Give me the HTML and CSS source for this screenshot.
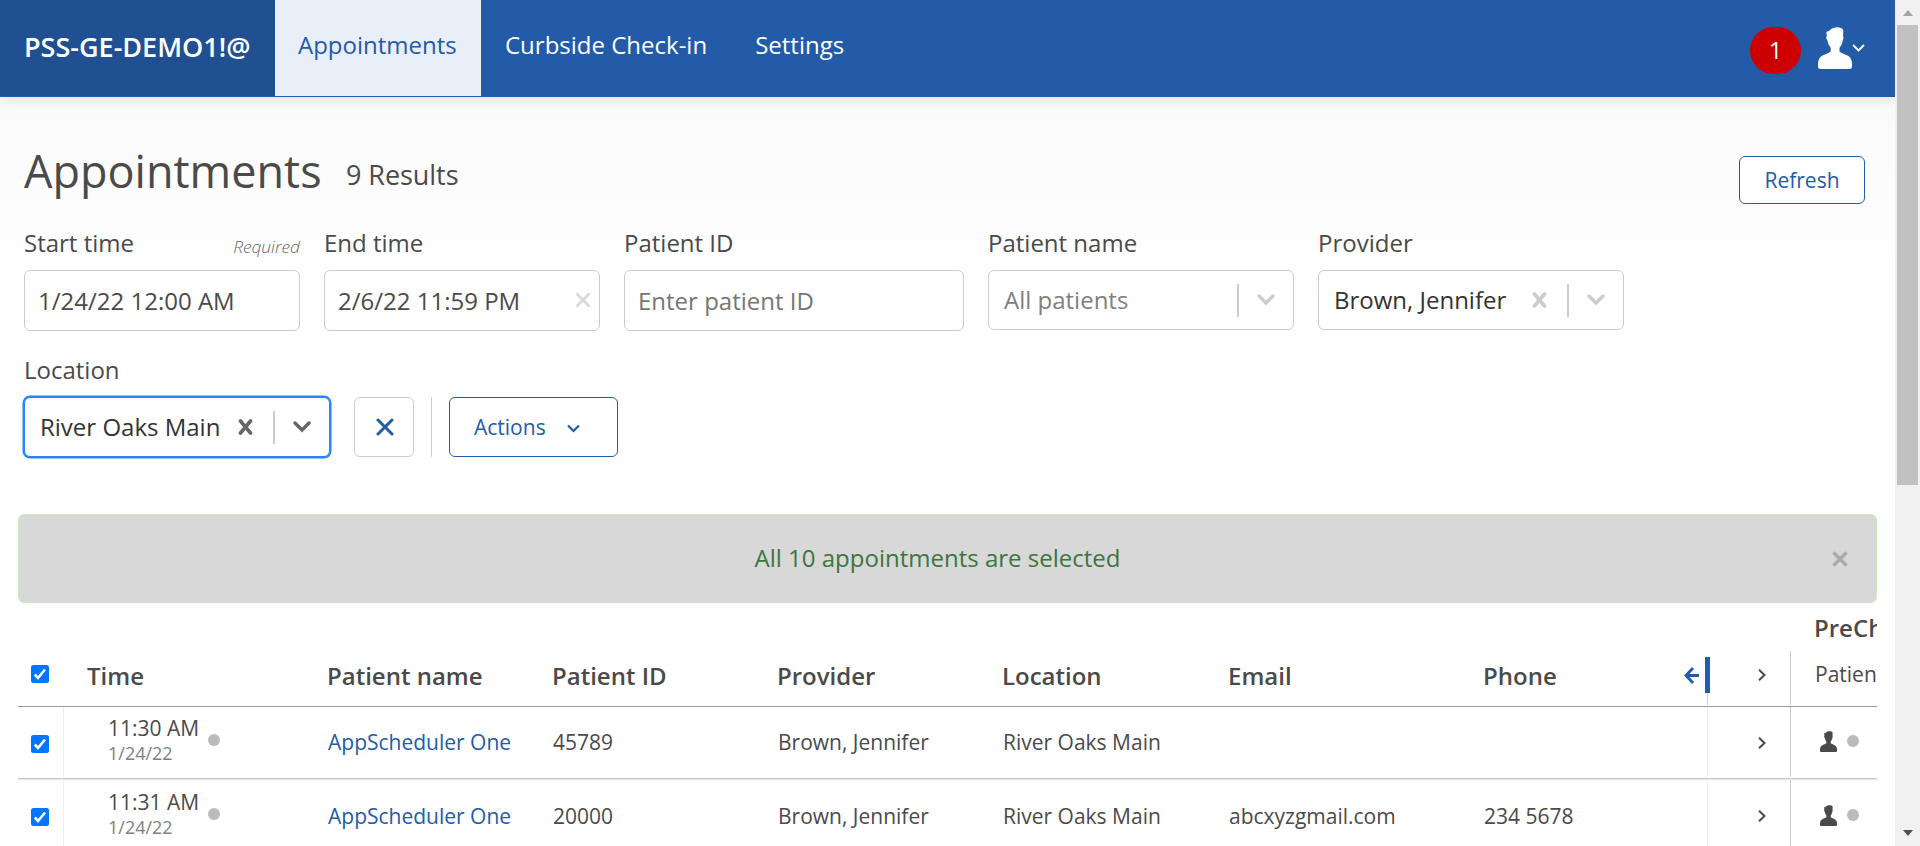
FILE: index.html
```html
<!DOCTYPE html>
<html lang="en">
<head>
<meta charset="utf-8">
<title>Appointments</title>
<link rel="stylesheet" href="styles.css">
</head>
<body>
<svg class="defs" width="0" height="0">
  <symbol id="person" viewBox="0 0 34 42">
    <path d="M8.300 5.500C8.300 4 11 4.800 12 3C14 .8 18 0 21 .4C24 .8 25.500 2.200 25.300 4.500L25 9C25.800 10 25.500 12 24.800 13C24.500 16 23.300 18.500 21.500 20.800V24.500C23.500 26.200 27 27.200 30 28.800C33 30.500 34 33.500 34 37V39.500C34 41.200 33 42 31.500 42H2.500C1 42 0 41.200 0 39.500V37C0 33.500 1.200 30.500 4 28.800C7 27.200 10.500 26.200 12.700 24.500V20.800C11 18.500 9.800 16 9.300 13C8 12 7.900 10 8.900 9Z" fill="currentColor"/>
  </symbol>
  <symbol id="next" viewBox="0 0 8 12">
    <path d="M1 .8L6.500 6L1 11.200" fill="none" stroke="currentColor" stroke-width="2"/>
  </symbol>
  <symbol id="cross" viewBox="0 0 16 16">
    <path d="M2.500 2L12.500 14M12.500 2L2.500 14" fill="none" stroke="currentColor" stroke-width="3.600" stroke-linecap="round"/>
  </symbol>
  <symbol id="down" viewBox="0 0 18 12">
    <path d="M2 2L9 9L16 2" fill="none" stroke="currentColor" stroke-width="3.400" stroke-linecap="round"/>
  </symbol>
  <symbol id="tick" viewBox="0 0 18 18">
    <rect width="18" height="18" rx="2.500" fill="#0075ff"/>
    <path d="M3.800 9.500L7 13L14 4.500" fill="none" stroke="#fff" stroke-width="2.600"/>
  </symbol>
</svg>
<div class="window">
  <div class="page">
    <header class="topbar">
      <div class="brand">PSS-GE-DEMO1!@</div>
      <nav class="nav">
        <a class="nav-item active">Appointments</a>
        <a class="nav-item">Curbside Check-in</a>
        <a class="nav-item">Settings</a>
      </nav>
      <div class="account">
        <span class="count">1</span>
        <svg class="avatar"><use href="#person"/></svg>
        <svg class="caret" viewBox="0 0 13 8"><path d="M1 1L6.500 6.500L12 1" fill="none" stroke="#fff" stroke-width="1.800"/></svg>
      </div>
    </header>
    <main class="main">
      <div class="title-row">
        <h1 class="title">Appointments</h1>
        <span class="results">9 Results</span>
        <button class="refresh">Refresh</button>
      </div>
      <div class="filters">
        <div class="field w-date">
          <div class="label">Start time<span class="required">Required</span></div>
          <div class="input">1/24/22 12:00 AM</div>
        </div>
        <div class="field w-date">
          <div class="label">End time</div>
          <div class="input">2/6/22 11:59 PM<svg class="input-x" viewBox="0 0 16 16"><path d="M1.500 1.500L14.500 14.500M14.500 1.500L1.500 14.500" stroke="currentColor" stroke-width="2.800"/></svg></div>
        </div>
        <div class="field w-id">
          <div class="label">Patient ID</div>
          <div class="input hint">Enter patient ID</div>
        </div>
        <div class="field w-select">
          <div class="label">Patient name</div>
          <div class="select"><span class="value hint">All patients</span><i class="bar"></i><svg class="down"><use href="#down"/></svg></div>
        </div>
        <div class="field w-select">
          <div class="label">Provider</div>
          <div class="select"><span class="value">Brown, Jennifer</span><svg class="cross"><use href="#cross"/></svg><i class="bar"></i><svg class="down"><use href="#down"/></svg></div>
        </div>
      </div>
      <div class="filters second">
        <div class="field w-select">
          <div class="label">Location</div>
          <div class="select focused"><span class="value">River Oaks Main</span><svg class="cross"><use href="#cross"/></svg><i class="bar"></i><svg class="down"><use href="#down"/></svg></div>
        </div>
        <button class="clear"><svg class="clear-x" viewBox="0 0 18 18"><path d="M2 2L16 16M16 2L2 16" stroke="currentColor" stroke-width="3" stroke-linecap="round"/></svg></button>
        <i class="split"></i>
        <button class="actions">Actions<svg class="actions-down" viewBox="0 0 13 9"><path d="M1 1.500L6.500 7L12 1.500" fill="none" stroke="currentColor" stroke-width="2.200"/></svg></button>
      </div>
      <div class="alert"><span class="alert-text">All 10 appointments are selected</span><svg class="alert-x" viewBox="0 0 16 16"><path d="M1.500 1.500L14.500 14.500M14.500 1.500L1.500 14.500" stroke="currentColor" stroke-width="3.200"/></svg></div>
      <div class="table">
        <div class="row head">
          <div class="check"><svg class="tick"><use href="#tick"/></svg></div>
          <div class="th th-time">Time</div>
          <div class="th">Patient name</div>
          <div class="th">Patient ID</div>
          <div class="th">Provider</div>
          <div class="th">Location</div>
          <div class="th">Email</div>
          <div class="th">Phone</div>
          <div class="resize"><svg class="arrow" viewBox="0 0 15 17"><path d="M9 1L2 8.500L9 16M2 8.500H15" fill="none" stroke="#1f5bb0" stroke-width="2.800"/></svg><div class="grip"><i class="handle"></i><i class="tail"></i></div></div>
          <div class="expand"><svg class="next"><use href="#next"/></svg></div>
          <div class="group"><div class="group-name">PreCheck</div><div class="group-col">Patient</div></div>
        </div>
        <div class="row body">
          <div class="check"><svg class="tick"><use href="#tick"/></svg></div>
          <div class="time"><div class="stamp">11:30 AM<small class="date">1/24/22</small></div><i class="dot"></i></div>
          <div class="td link">AppScheduler One</div>
          <div class="td">45789</div>
          <div class="td">Brown, Jennifer</div>
          <div class="td">River Oaks Main</div>
          <div class="td"></div>
          <div class="td"></div>
          <div class="edge"></div>
          <div class="expand"><svg class="next"><use href="#next"/></svg></div>
          <div class="status"><svg class="mini"><use href="#person"/></svg><i class="dot"></i></div>
        </div>
        <div class="row body last">
          <div class="check"><svg class="tick"><use href="#tick"/></svg></div>
          <div class="time"><div class="stamp">11:31 AM<small class="date">1/24/22</small></div><i class="dot"></i></div>
          <div class="td link">AppScheduler One</div>
          <div class="td">20000</div>
          <div class="td">Brown, Jennifer</div>
          <div class="td">River Oaks Main</div>
          <div class="td">abcxyzgmail.com</div>
          <div class="td">234 5678</div>
          <div class="edge"></div>
          <div class="expand"><svg class="next"><use href="#next"/></svg></div>
          <div class="status"><svg class="mini"><use href="#person"/></svg><i class="dot"></i></div>
        </div>
      </div>
    </main>
  </div>
  <div class="scrollbar">
    <i class="tri up"></i>
    <i class="thumb"></i>
    <i class="tri dn"></i>
  </div>
</div>
</body>
</html>
```
FILE: styles.css
```css
* { box-sizing: border-box; }
body { margin: 0; font-family: "Open Sans", "Noto Sans", sans-serif; font-size: 24px; color: #4a4a4a; overflow: hidden; }
.defs { display: none; }
svg { display: block; flex: none; }
button { font: inherit; background: #fff; padding: 0; margin: 0; }
.window { display: flex; width: 1920px; height: 846px; overflow: hidden; }
.page { width: 1895px; height: 846px; overflow: hidden; background: linear-gradient(#fafafa 97px, #fff 300px); }

.topbar { display: flex; height: 97px; background: #235ba8; color: #fff; box-shadow: 0 3px 12px rgba(0, 0, 0, .1); }
.brand { width: 275px; height: 96px; padding-left: 24px; background: #205091; font-size: 27px; font-weight: 600; line-height: 93px; white-space: nowrap; }
.nav { display: flex; height: 96px; font-weight: 500; }
.nav-item { padding: 0 24px; line-height: 90px; white-space: nowrap; }
.nav-item.active { width: 206px; padding-left: 23px; background: #e9eff9; color: #235ba8; font-weight: 400; }
.account { display: flex; margin-left: auto; padding: 27px 30px 0 0; }
.count { width: 51px; height: 47px; border-radius: 24px; background: #c00; text-align: center; line-height: 45px; }
.avatar { width: 34px; height: 42px; margin-left: 17px; }
.caret { width: 13px; height: 8px; margin: 17px 0 0 0; }

.main { padding: 43px 18px 0; }
.title-row { display: flex; height: 86px; padding: 0 12px 0 6px; }
.title { margin: 0; width: 322px; font-size: 45px; font-weight: 400; line-height: 62px; }
.results { font-size: 27px; line-height: 40px; padding-top: 15px; letter-spacing: -.06px; }
.refresh { width: 126px; height: 48px; margin: 16px 0 0 auto; border: 1px solid #235ba8; border-radius: 6px; color: #235ba8; font-size: 21px; }

.filters { display: flex; gap: 24px; padding-left: 6px; height: 127px; }
.label { display: flex; justify-content: space-between; height: 34px; line-height: 34px; margin-bottom: 10px; }
.required { font-size: 17.300px; font-style: italic; font-weight: 300; line-height: 41px; color: #666; }
.w-date { width: 276px; }
.w-id { width: 340px; }
.w-select { width: 306px; }
.input { display: flex; justify-content: space-between; height: 61px; padding: 0 8px 0 13px; border: 1px solid #ccc; border-radius: 6px; background: #fff; line-height: 60px; }
.input-x { width: 16px; height: 16px; margin-top: 21px; color: #d8d8d8; }
.hint { color: #767676; }
.select { display: flex; align-items: center; height: 60px; padding: 0 18px 0 15px; border: 1px solid #ccc; border-radius: 6px; background: #fff; color: #ccc; }
.value { flex: 1; color: #333; line-height: 58px; height: 58px; white-space: nowrap; }
.value.hint { color: #808080; }
.cross { width: 16px; height: 16px; }
.bar { width: 2px; height: 33px; margin: 0 18px 0 19px; background: #ccc; }
.down { width: 18px; height: 12px; }
.select.focused { border-color: #2684ff; box-shadow: 0 0 0 1.500px #2684ff; color: #666; }
.clear { display: flex; align-items: center; justify-content: center; width: 60px; height: 60px; margin-top: 44px; border: 1px solid #ccc; border-radius: 6px; color: #235ba8; }
.clear-x { width: 18px; height: 18px; margin-left: 1px; }
.split { width: 1px; height: 60px; margin: 44px -7px 0 -7px; background: #ccc; }
.actions { display: flex; align-items: center; width: 169px; height: 60px; margin-top: 44px; padding-left: 24px; border: 1px solid #235ba8; border-radius: 6px; color: #235ba8; font-size: 21px; }
.actions-down { width: 13px; height: 9px; margin: 3px 0 0 21px; }

.alert { display: flex; align-items: center; height: 89px; margin-top: 34px; padding: 0 28px 0 24px; border: 1px solid #d0e9c0; border-radius: 6px; background: #d8d8d8; color: #3c763d; }
.alert-text { flex: 1; text-align: center; padding-bottom: 2px; }
.alert-x { width: 16px; height: 16px; color: #aaa; }

.table { width: 1859px; overflow: hidden; }
.row { display: grid; grid-template-columns: 46px 263px 225px 225px 225px 226px 255px 202px 23px 83px 86px; }
.head { height: 104px; border-bottom: 1px solid #999; }
.head .check { padding: 62px 0 0 13px; }
.tick { width: 18px; height: 18px; }
.th { font-weight: 600; line-height: 34px; padding-top: 56px; white-space: nowrap; }
.th-time { padding-left: 23px; }
.resize { display: flex; align-items: flex-start; padding-top: 54px; }
.arrow { width: 15px; height: 17px; margin: 10px 0 0 -1px; }
.grip { display: flex; flex: none; flex-direction: column; width: 5px; margin-left: 6px; }
.handle { height: 36px; background: #1f5bb0; }
.tail { width: 1px; height: 12px; margin-left: 2px; background: #ccc; }
.expand { display: flex; justify-content: flex-end; padding-right: 24px; }
.next { width: 8px; height: 12px; }
.head .expand { height: 54px; margin-top: 48px; padding-top: 18px; border-right: 1px solid #ccc; }
.group { padding-left: 23px; white-space: nowrap; }
.group-name { font-weight: 600; line-height: 34px; padding-top: 8px; height: 49px; }
.group-col { font-size: 21px; line-height: 30px; padding: 7px 0 0 1px; }

.body { height: 72px; margin-bottom: 1px; border-bottom: 1px solid #c8c8c8; box-shadow: 0 1px 0 #e6e6e6; font-size: 21px; }
.body .check { height: 70px; padding: 28px 0 0 13px; border-right: 1px solid #eee; }
.time { display: flex; padding: 6px 0 0 44px; }
.stamp { width: 100px; line-height: 30px; white-space: nowrap; }
.date { display: block; font-size: 18px; line-height: 20px; color: #808080; }
.dot { width: 12px; height: 12px; border-radius: 50%; background: #bbb; }
.time .dot { margin-top: 21px; }
.td { line-height: 30px; padding: 20px 0 0 1px; white-space: nowrap; }
.link { color: #235ba8; }
.edge { height: 70px; border-right: 1px solid #eee; }
.body .expand { height: 70px; padding-top: 30px; border-right: 1px solid #ccc; }
.status { display: flex; padding: 24px 0 0 29px; }
.mini { width: 17px; height: 21px; color: #4a4a4a; }
.status .dot { margin: 4px 0 0 10px; }
.last .time { padding-top: 7px; }
.last .td { padding-top: 21px; }
.last .status { padding-top: 25px; }

.scrollbar { display: flex; flex-direction: column; align-items: center; width: 25px; background: #f1f1f1; }
.tri { width: 0; height: 0; border: 5px solid transparent; }
.up { border-top: 0; border-bottom: 6px solid #a3a3a3; margin: 10px 0 9px; }
.thumb { width: 21px; height: 460px; background: #c1c1c1; }
.dn { border-bottom: 0; border-top: 6px solid #505050; margin-top: 345px; }
```
